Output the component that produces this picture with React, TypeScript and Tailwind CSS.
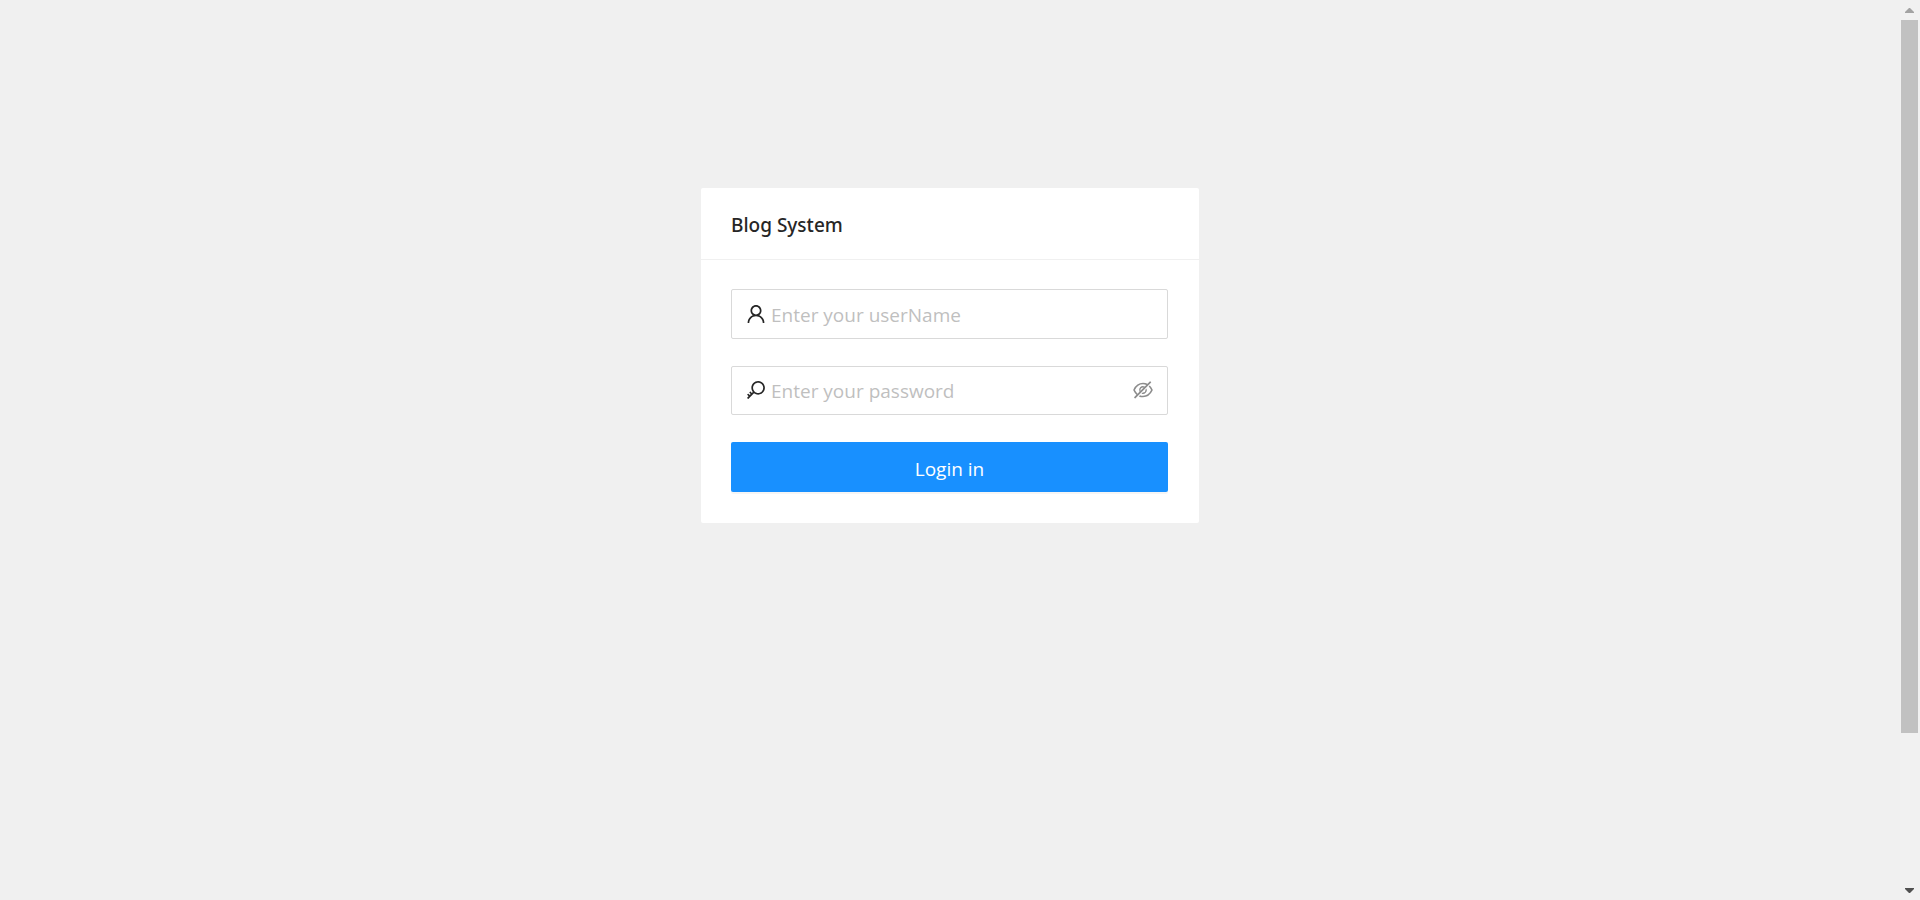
import { useState } from "react";
import { AiOutlineEyeInvisible, AiOutlineEye, AiOutlineUser } from "react-icons/ai";

const ICON_BOX = "64 64 896 896";

const fieldBox =
  "flex items-center gap-[5px] rounded-[2px] border border-[#d9d9d9] bg-white px-[14px] text-[#262626] focus-within:border-[#40a9ff]";
const fieldInput =
  "min-w-0 flex-1 bg-transparent pt-[2px] text-[19px] leading-[30px] outline-none placeholder:text-[#bfbfbf]";

function KeyIcon() {
  return (
    <svg width="20" height="20" viewBox={ICON_BOX} fill="currentColor" aria-hidden="true">
      <path d="M608 112c-167.9 0-304 136.1-304 304 0 70.3 23.9 135 63.9 186.5l-41.1 41.1-62.3-62.3a8.15 8.15 0 0 0-11.4 0l-39.8 39.8a8.15 8.15 0 0 0 0 11.4l62.3 62.3-44.9 44.9-62.3-62.3a8.15 8.15 0 0 0-11.4 0l-39.8 39.8a8.15 8.15 0 0 0 0 11.4l62.3 62.3-65.3 65.3a8.03 8.03 0 0 0 0 11.3l42.3 42.3c3.1 3.1 8.2 3.1 11.3 0l253.6-253.6A304.06 304.06 0 0 0 608 720c167.9 0 304-136.1 304-304S775.9 112 608 112zm161.2 465.2C726.2 620.3 668.9 644 608 644c-60.9 0-118.2-23.7-161.2-66.8-43.1-43-66.8-100.3-66.8-161.2 0-60.9 23.7-118.2 66.8-161.2 43-43.1 100.3-66.8 161.2-66.8 60.9 0 118.2 23.7 161.2 66.8 43.1 43 66.8 100.3 66.8 161.2 0 60.9-23.7 118.2-66.8 161.2z" />
    </svg>
  );
}

function LoginCard() {
  const [visible, setVisible] = useState(false);
  const Eye = visible ? AiOutlineEye : AiOutlineEyeInvisible;

  return (
    <section className="w-full max-w-[498px] rounded-[2px] bg-white">
      <header className="border-b border-[#f0f0f0] px-[30px] pt-[22px] pb-[19px]">
        <h1 className="font-['Segoe_UI','Noto_Sans',sans-serif] text-[19px] leading-[30px] font-medium text-[#262626]">
          Blog System
        </h1>
      </header>
      <form
        className="flex flex-col gap-[27px] pt-[29px] pr-[31px] pb-[31px] pl-[30px]"
        onSubmit={(event) => event.preventDefault()}
      >
        <div className={`${fieldBox} h-[50px]`}>
          <label htmlFor="username" aria-label="User name">
            <AiOutlineUser size={20} viewBox={ICON_BOX} />
          </label>
          <input id="username" type="text" placeholder="Enter your userName" className={fieldInput} />
        </div>
        <div className={`${fieldBox} h-[49px] pb-px`}>
          <label htmlFor="password" aria-label="Password">
            <KeyIcon />
          </label>
          <input
            id="password"
            type={visible ? "text" : "password"}
            placeholder="Enter your password"
            className={fieldInput}
          />
          <button
            type="button"
            aria-label="Toggle password visibility"
            className="text-[#8c8c8c]"
            onClick={() => setVisible(!visible)}
          >
            <Eye size={20} viewBox={ICON_BOX} />
          </button>
        </div>
        <button
          type="submit"
          className="h-[50px] rounded-[2px] bg-[#1890ff] pt-[3px] text-[19px] leading-[30px] text-white shadow-[0_2px_0_rgba(0,0,0,0.04)]"
        >
          Login in
        </button>
      </form>
    </section>
  );
}

function ScrollRail() {
  return (
    <div aria-hidden="true" className="flex w-5 flex-col items-center bg-[#f1f1f1] pr-[2px] pl-px">
      <div className="flex h-5 items-center pt-px">
        <svg width="9" height="5" viewBox="0 0 9 5" fill="#a3a3a3">
          <path d="M4 0h1l4 4v1H0V4z" />
        </svg>
      </div>
      <div className="flex w-full flex-1 flex-col">
        <div className="grow-[713] basis-0 bg-[#c1c1c1]" />
        <div className="grow-[147] basis-0" />
      </div>
      <div className="flex h-5 items-center pt-px">
        <svg width="9" height="5" viewBox="0 0 9 5" fill="#505050">
          <path d="M0 0h9v1L5 5H4L0 1z" />
        </svg>
      </div>
    </div>
  );
}

export default function App() {
  return (
    <div className="flex min-h-screen bg-[#f0f0f0] font-['Segoe_UI','Open_Sans',sans-serif]">
      <main className="flex flex-1 items-start justify-center pt-[188px]">
        <LoginCard />
      </main>
      <ScrollRail />
    </div>
  );
}
